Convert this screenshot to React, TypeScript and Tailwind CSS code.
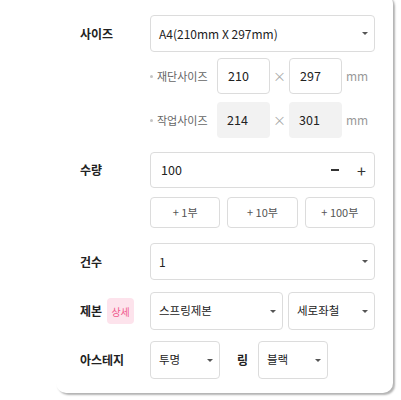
const Caret = () => (
  <span className="ml-auto w-0 h-0 border-l-[3px] border-r-[3px] border-t-[3px] border-l-transparent border-r-transparent border-t-[#555]" />
);

const Select = ({ value, className = '', small }: { value: string; className?: string; small?: boolean }) => (
  <div
    className={`flex items-center h-[37px] pl-[8px] pr-[6px] border border-[#dcdcdc] rounded-[4px] bg-white text-[#222] ${
      small ? 'text-[11.5px]' : 'text-[12px]'
    } ${className}`}
  >
    <span>{value}</span>
    <Caret />
  </div>
);

const Label = ({ children }: { children: React.ReactNode }) => (
  <div className="w-[70px] shrink-0 text-[12px] font-bold text-[#222]">{children}</div>
);

const SizeBox = ({ value, filled }: { value: string; filled?: boolean }) => (
  <div
    className={`flex items-center w-[53px] h-[36px] pl-[10px] rounded-[4px] text-[12.5px] text-[#222] ${
      filled ? 'bg-[#f2f2f2]' : 'border border-[#dcdcdc] bg-white'
    }`}
  >
    {value}
  </div>
);

const SizeRow = ({ title, w, h, filled }: { title: string; w: string; h: string; filled?: boolean }) => (
  <div className="flex items-center ml-[70px] h-[36px]">
    <span className="w-[3px] h-[3px] rounded-full bg-[#c4c4c4]" />
    <span className="ml-[4px] w-[60px] text-[11px] text-[#666]">{title}</span>
    <SizeBox value={w} filled={filled} />
    <span className="w-[19px] text-center text-[13px] text-[#aaa]">×</span>
    <SizeBox value={h} filled={filled} />
    <span className="ml-[4px] text-[12px] text-[#999]">mm</span>
  </div>
);

const QtyButton = ({ text }: { text: string }) => (
  <button className="flex-1 h-[31px] border border-[#dcdcdc] rounded-[4px] bg-white text-[11px] text-[#555]">
    {text}
  </button>
);

export default function App() {
  return (
    <div
      className="w-[401px] h-[400px] bg-white overflow-hidden"
      style={{ fontFamily: '"Noto Sans CJK KR", "Noto Sans", sans-serif' }}
    >
      <div className="ml-[56px] mt-[-6px] w-[337px] h-[399px] bg-white rounded-[10px] shadow-[2px_2px_2px_rgba(0,0,0,0.3)] pl-[24px] pr-[18px] pt-[21px]">
        {/* 사이즈 */}
        <div className="flex items-center">
          <Label>사이즈</Label>
          <Select value="A4(210mm X 297mm)" className="flex-1" />
        </div>
        <div className="mt-[6px]">
          <SizeRow title="재단사이즈" w="210" h="297" />
        </div>
        <div className="mt-[8px]">
          <SizeRow title="작업사이즈" w="214" h="301" filled />
        </div>

        {/* 수량 */}
        <div className="flex items-center mt-[14px]">
          <Label>수량</Label>
          <div className="flex-1 flex items-center h-[36px] pl-[10px] pr-[8px] border border-[#dcdcdc] rounded-[4px] text-[12.5px] text-[#222]">
            <span>100</span>
            <span className="ml-auto w-[8px] h-[2px] bg-[#333]" />
            <span className="ml-[18px] text-[16px] leading-none text-[#333]">+</span>
          </div>
        </div>
        <div className="flex gap-[7px] ml-[70px] mt-[9px]">
          <QtyButton text="+ 1부" />
          <QtyButton text="+ 10부" />
          <QtyButton text="+ 100부" />
        </div>

        {/* 건수 */}
        <div className="flex items-center mt-[15px]">
          <Label>건수</Label>
          <Select value="1" className="flex-1" />
        </div>

        {/* 제본 */}
        <div className="flex items-center mt-[12px]">
          <div className="w-[70px] shrink-0 flex items-center">
            <span className="text-[12px] font-bold text-[#222]">제본</span>
            <span className="ml-[5px] flex items-center justify-center w-[27px] h-[26px] rounded-[4px] bg-[#fde3ec] text-[10px] text-[#f0588c]">
              상세
            </span>
          </div>
          <Select value="스프링제본" small className="w-[133px] h-[38px]" />
          <Select value="세로좌철" small className="flex-1 ml-[5px] h-[38px]" />
        </div>

        {/* 아스테지 */}
        <div className="flex items-center mt-[11px]">
          <Label>아스테지</Label>
          <Select value="투명" small className="w-[70px] h-[38px]" />
          <span className="ml-[17px] w-[21px] text-[12px] font-bold text-[#222]">링</span>
          <Select value="블랙" small className="w-[70px] h-[38px]" />
        </div>
      </div>
    </div>
  );
}
